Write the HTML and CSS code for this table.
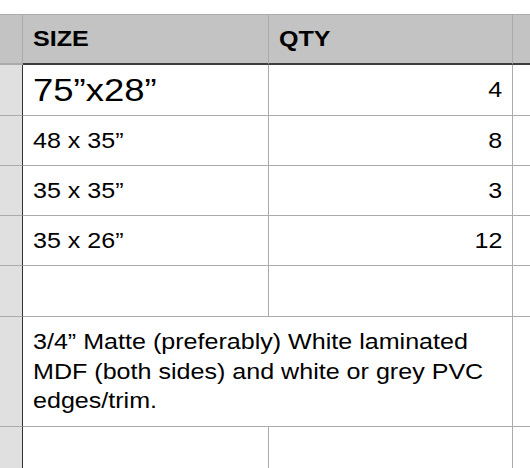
FILE: index.html
```html
<!DOCTYPE html>
<html lang="en">
<head>
<meta charset="utf-8">
<title>Sizes</title>
<link rel="stylesheet" href="styles.css">
</head>
<body>
<div class="sheet">
  <div class="cell gut head"></div>
  <div class="cell head"><span class="t">SIZE</span></div>
  <div class="cell head"><span class="t">QTY</span></div>
  <div class="cell head end"></div>

  <div class="cell gut"></div>
  <div class="cell"><span class="t big">75”x28”</span></div>
  <div class="cell num"><span class="t">4</span></div>
  <div class="cell end"></div>

  <div class="cell gut"></div>
  <div class="cell"><span class="t">48 x 35”</span></div>
  <div class="cell num"><span class="t">8</span></div>
  <div class="cell end"></div>

  <div class="cell gut"></div>
  <div class="cell"><span class="t">35 x 35”</span></div>
  <div class="cell num"><span class="t">3</span></div>
  <div class="cell end"></div>

  <div class="cell gut"></div>
  <div class="cell"><span class="t">35 x 26”</span></div>
  <div class="cell num"><span class="t">12</span></div>
  <div class="cell end"></div>

  <div class="cell gut"></div>
  <div class="cell"></div>
  <div class="cell"></div>
  <div class="cell end"></div>

  <div class="cell gut"></div>
  <div class="cell merged"><p class="note">3/4” Matte (preferably) White laminated MDF (both sides) and white or grey PVC edges/trim.</p></div>
  <div class="cell end"></div>

  <div class="cell gut"></div>
  <div class="cell"></div>
  <div class="cell"></div>
  <div class="cell end"></div>
</div>
</body>
</html>
```

FILE: styles.css
```css
html, body {
  margin: 0;
  padding: 0;
  overflow: hidden;
  background: #ffffff;
}

body {
  font-family: "Liberation Sans", Arial, sans-serif;
  color: #000000;
}

.sheet {
  margin-top: 14px;
  border-top: 1px solid #ababab;
  display: grid;
  grid-template-columns: 23px 246px 244px 1fr;
  grid-template-rows: 50px 51px 50px 50px 50px 51px 110px 60px;
}

.cell {
  box-sizing: border-box;
  border-right: 1px solid #ababab;
  border-bottom: 1px solid #ababab;
  display: flex;
  align-items: center;
  padding: 0 10px;
  font-size: 22px;
  line-height: 1;
  white-space: nowrap;
  overflow: hidden;
}

.cell.end {
  border-right: none;
}

.cell.gut {
  background: #e0e0e0;
  border-right-color: #333333;
  padding: 0;
}

.cell.head {
  background: #c3c3c3;
  font-weight: bold;
  border-bottom: 2px solid #3c3c3c;
}

.cell.gut.head {
  border-right-color: #ababab;
  border-bottom-color: #ababab;
}

.cell.num {
  justify-content: flex-end;
}

.t {
  display: inline-block;
  transform: scaleX(1.14);
  transform-origin: left center;
}

.cell.num .t {
  transform-origin: right center;
}

.t.big {
  font-size: 32px;
}

.cell.merged {
  grid-column: span 2;
  white-space: normal;
}

.note {
  margin: 0;
  width: 415px;
  flex: none;
  line-height: 29.5px;
  transform: scaleX(1.14);
  transform-origin: left center;
}
```
